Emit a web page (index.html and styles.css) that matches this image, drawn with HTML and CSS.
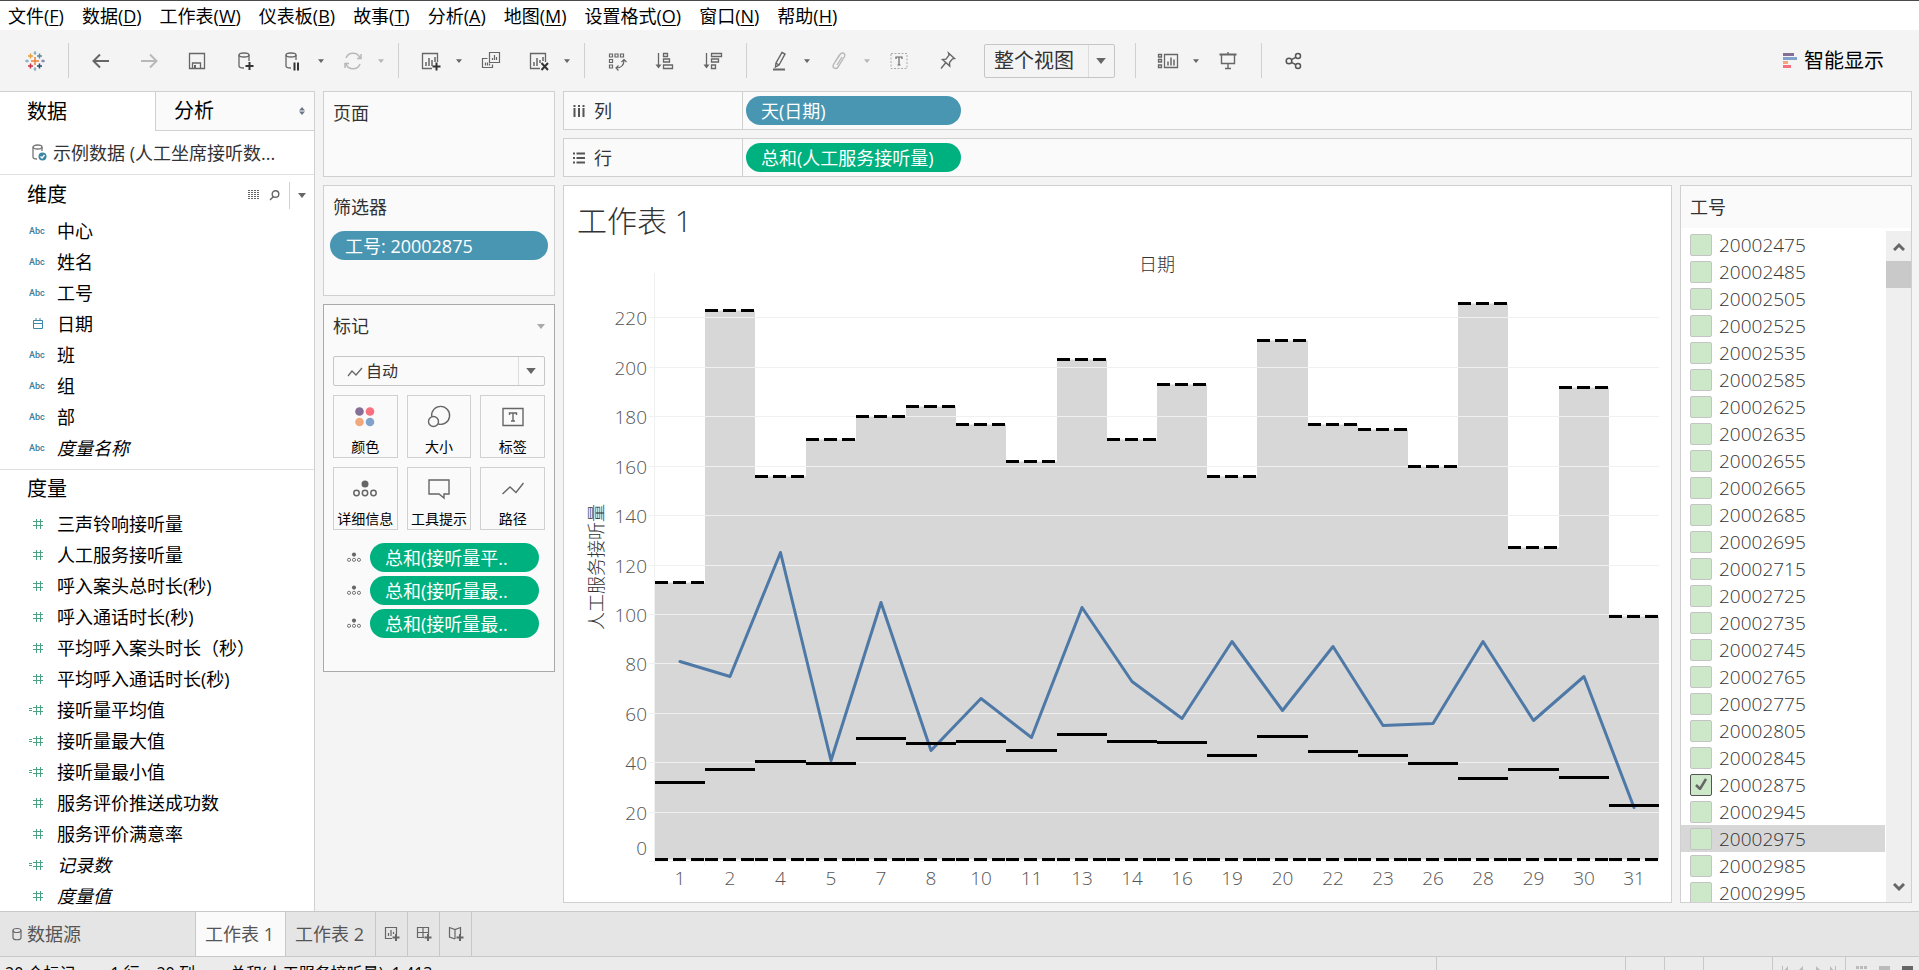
FILE: index.html
```html
<!DOCTYPE html>
<html lang="zh-CN">
<head>
<meta charset="utf-8">
<title>工作表 1</title>
<link rel="stylesheet" href="styles.css">
</head>
<body>
<svg class="sprites" aria-hidden="true">
  <symbol id="hash" viewBox="0 0 16 12"><path d="M7.500 1v10M11.500 1v10M4 3.500h10M4 7.500h10" fill="none" stroke="#4aa283"/></symbol>
  <symbol id="calc-hash" viewBox="0 0 16 12"><path d="M7.500 1v10M11.500 1v10M4 3.500h10M4 7.500h10M0 4.500h3M0 6.500h3" fill="none" stroke="#4aa283"/></symbol>
  <symbol id="detail" viewBox="0 0 24 18"><circle cx="12" cy="4" r="3.500" fill="#666"/><g fill="none" stroke="#666" stroke-width="1.500"><circle cx="3.500" cy="13" r="2.700"/><circle cx="12" cy="13" r="2.700"/><circle cx="20.500" cy="13" r="2.700"/></g></symbol>
  <symbol id="caret" viewBox="0 0 8 5"><path d="M0 0h8L4 5z" fill="currentColor"/></symbol>
</svg>

<nav class="menubar">
  <button>文件(<u>F</u>)</button><button>数据(<u>D</u>)</button><button>工作表(<u>W</u>)</button><button>仪表板(<u>B</u>)</button><button>故事(<u>T</u>)</button><button>分析(<u>A</u>)</button><button>地图(<u>M</u>)</button><button>设置格式(<u>O</u>)</button><button>窗口(<u>N</u>)</button><button>帮助(<u>H</u>)</button>
</nav>

<div class="toolbar">
  <button class="tool" aria-label="起始页"><svg viewBox="0 0 24 24" fill="none"><path d="M12 8v8M8 12h8" stroke="#eb7f3a" stroke-width="1.500"/><path d="M7.500 4.500v5M5 7h5" stroke="#e8a13a" stroke-width="1.500"/><path d="M16.500 4.500v5M14 7h5" stroke="#5a8a9c" stroke-width="1.500"/><path d="M7.500 14.500v5M5 17h5" stroke="#c8334a" stroke-width="1.500"/><path d="M16.500 14.500v5M14 17h5" stroke="#2d4d78" stroke-width="1.500"/><path d="M12 2v4M10.500 4h3M12 18v4M10.500 20h3" stroke="#6fa0b4"/><path d="M2 12h4M4 10.500v3" stroke="#6fa0b4"/><path d="M18 12h4M20 10.500v3" stroke="#6a6aa8"/></svg></button>
  <span class="sep"></span>
  <button class="tool" aria-label="撤消"><svg viewBox="0 0 24 24" fill="none" stroke="#666" stroke-width="2"><path d="M20 12H5M11 5.500L4.500 12l6.500 6.500"/></svg></button>
  <button class="tool" aria-label="重做"><svg viewBox="0 0 24 24" fill="none" stroke="#b8b8b8" stroke-width="2"><path d="M4 12h15M13 5.500l6.500 6.500-6.500 6.500"/></svg></button>
  <button class="tool" aria-label="保存"><svg viewBox="0 0 24 24" fill="none" stroke="#666" stroke-width="1.300"><path d="M4.500 4.500h15v15h-15zM7.500 19v-5h8v5"/><path d="M9 16h2v3H9z" fill="#666" stroke="none"/></svg></button>
  <button class="tool" aria-label="新建数据源"><svg viewBox="0 0 24 24" fill="none" stroke="#666" stroke-width="1.300"><ellipse cx="11" cy="6" rx="5" ry="2"/><path d="M6 6v11c0 1.500 2 2 5 2M16 6v6"/><path d="M16.500 13v8M12.500 17h8" stroke="#333" stroke-width="2"/></svg></button>
  <span class="split"><button class="tool" aria-label="暂停自动更新"><svg viewBox="0 0 24 24" fill="none" stroke="#666" stroke-width="1.300"><ellipse cx="10" cy="6" rx="5" ry="2"/><path d="M5 6v11c0 1.500 2 2 5 2M15 6v5"/><path d="M13.500 13.500v8M17 13.500v8" stroke="#333" stroke-width="2"/></svg></button><button class="more" aria-label="更多"><svg><use href="#caret"/></svg></button></span>
  <span class="split dim"><button class="tool" aria-label="运行更新"><svg viewBox="0 0 24 24" fill="none" stroke="#b8b8b8" stroke-width="1.500"><path d="M5 9a7.500 7.500 0 0 1 14 0M19 15a7.500 7.500 0 0 1-14 0M20 5v4.500h-4M4 19v-4.500h4"/></svg></button><button class="more" aria-label="更多"><svg><use href="#caret"/></svg></button></span>
  <span class="sep"></span>
  <span class="split"><button class="tool" aria-label="新建工作表"><svg viewBox="0 0 24 24" fill="none" stroke="#666" stroke-width="1.300"><path d="M13 19.500H3.500v-15h15V13"/><path d="M7 17v-4M10 17V9M13 17v-6M16 13V8" stroke-width="1.500"/><path d="M17.500 13.500v8M13.500 17.500h8" stroke="#333" stroke-width="2"/></svg></button><button class="more" aria-label="更多"><svg><use href="#caret"/></svg></button></span>
  <button class="tool" aria-label="复制"><svg viewBox="0 0 24 24" fill="none" stroke="#666" stroke-width="1.200"><path d="M10.500 3.500h10v10h-10zM8.500 9.500h-5v9h10v-3"/><path d="M13.500 11V9M15.500 11V6M17.500 11V8M6.500 16.500v-3M8.500 16.500v-3M10.500 16.500v-2"/></svg></button>
  <span class="split"><button class="tool" aria-label="清除工作表"><svg viewBox="0 0 24 24" fill="none" stroke="#666" stroke-width="1.300"><path d="M13 19.500H3.500v-15h15V13"/><path d="M7 17v-4M10 17V9M13 14v-3M16 12V8" stroke-width="1.500"/><path d="M14.500 14l6.500 7M21 14l-6.500 7" stroke="#333" stroke-width="2"/></svg></button><button class="more" aria-label="更多"><svg><use href="#caret"/></svg></button></span>
  <span class="sep"></span>
  <button class="tool" aria-label="交换行和列"><svg viewBox="0 0 24 24" fill="none" stroke="#666" stroke-width="1.200"><path d="M4.500 5h3v3h-3zM10 5h3v3h-3zM15.500 5h3v3h-3zM4.500 10.500h3v3h-3zM4.500 16h3v3h-3z"/><path d="M11 19c5 0 8-3 8-8M16.500 13l2.500-2.500 2.500 2.500M13.500 16.500L11 19l2.500 2.500"/></svg></button>
  <button class="tool" aria-label="升序排序"><svg viewBox="0 0 24 24" fill="none" stroke="#666" stroke-width="1.300"><path d="M5.500 4v14M10.500 4.500h4v3h-4zM10.500 10h6v3h-6zM10.500 16h9v3.500h-9z"/><path d="M2.500 15.500h6l-3 4z" fill="#666" stroke="none"/></svg></button>
  <button class="tool" aria-label="降序排序"><svg viewBox="0 0 24 24" fill="none" stroke="#666" stroke-width="1.300"><path d="M5.500 4v14M10.500 4.500h10v3h-10zM10.500 10h7v3h-7zM10.500 16h4v3.500h-4z"/><path d="M2.500 15.500h6l-3 4z" fill="#666" stroke="none"/></svg></button>
  <span class="sep"></span>
  <span class="split"><button class="tool" aria-label="突出显示"><svg viewBox="0 0 24 24" fill="none" stroke="#666" stroke-width="1.400"><path d="M15 3.500l3 1.500-6 11-3.500 2 .5-4zM9 14l3 2"/><path d="M6 20.500h12" stroke-width="2"/></svg></button><button class="more" aria-label="更多"><svg><use href="#caret"/></svg></button></span>
  <span class="split dim"><button class="tool" aria-label="组"><svg viewBox="0 0 24 24" fill="none" stroke="#b8b8b8" stroke-width="1.400"><path d="M8 13l5-7.500c2-3 6-1 4.500 2L11 18c-2 3-6.500 1-4.500-2.500l5.500-9M15 8l-5 8"/></svg></button><button class="more" aria-label="更多"><svg><use href="#caret"/></svg></button></span>
  <button class="tool" aria-label="显示标记标签"><svg viewBox="0 0 24 24" fill="none" stroke="#aaa"><path d="M4 4.500h16v15H4z" stroke-dasharray="2 1.500"/><path d="M9 10V8h6v2M12 8v8M10.500 16h3" stroke="#666" stroke-width="1.200"/></svg></button>
  <button class="tool" aria-label="固定轴"><svg viewBox="0 0 24 24" fill="none" stroke="#666" stroke-width="1.400"><path d="M13.500 4l6 5.500-2 .3-3 3.700.2 3.500L7.500 10.500l3.500-.3 3-4zM10.500 14L6 19.500"/></svg></button>
  <span class="dropdown fit"><select aria-label="适合"><option>整个视图</option></select><svg class="arrow"><use href="#caret"/></svg></span>
  <span class="sep"></span>
  <span class="split"><button class="tool" aria-label="显示/隐藏卡"><svg viewBox="0 0 24 24" fill="none" stroke="#666" stroke-width="1.300"><path d="M8.500 5.500h13v13h-13zM2.500 5.500h3v2.500h-3zM2.500 10.500h3v2.500h-3zM2.500 16h3v2.500h-3z"/><path d="M12 16.500v-4M15 16.500v-8M18 16.500v-6" stroke-width="1.500"/></svg></button><button class="more" aria-label="更多"><svg><use href="#caret"/></svg></button></span>
  <button class="tool" aria-label="演示模式"><svg viewBox="0 0 24 24" fill="none" stroke="#666" stroke-width="1.400"><path d="M5.500 6v8.500h13V6M12 14.500v5M9 19.500h6M12 3v2"/><path d="M3.500 5.500h17" stroke-width="2"/></svg></button>
  <span class="sep"></span>
  <button class="tool" aria-label="共享"><svg viewBox="0 0 24 24" fill="none" stroke="#555" stroke-width="1.500"><circle cx="7" cy="12" r="2.800"/><circle cx="16" cy="7" r="2.500"/><circle cx="16" cy="17" r="2.500"/><path d="M9.500 10.700l4.200-2.400M9.500 13.300l4.200 2.400"/></svg></button>
  <button class="showme"><svg viewBox="0 0 14 16"><path fill="#866f97" d="M0 0h11v3H0z"/><path fill="#81a3cb" d="M0 4h14v3H0z"/><path fill="#f1a87c" d="M0 8h5v3H0z"/><path fill="#f9707f" d="M0 12h8v3H0z"/></svg>智能显示</button>
</div>

<main class="workspace">
  <aside class="datapane">
    <div class="pane-tabs">
      <button class="active">数据</button>
      <button class="idle">分析<svg viewBox="0 0 6 8"><path d="M0 3.500h6L3 0zM0 4.500h6L3 8z" fill="#6b7688"/></svg></button>
    </div>
    <button class="source"><svg viewBox="0 0 16 18" fill="none" stroke="#777" stroke-width="1.300"><ellipse cx="6.500" cy="3" rx="4.500" ry="2"/><path d="M2 3v10c0 1.200 1.500 2 4 2M11 3v4"/><circle cx="11.500" cy="12.500" r="4" fill="#3c87a5" stroke="none"/><path d="M9.500 12.500l1.500 1.500 2.500-3" stroke="#fff"/></svg>示例数据 (人工坐席接听数...</button>
    <section class="fields dimensions">
      <header><h2>维度</h2>
        <button aria-label="查看数据"><svg class="grid-icon" viewBox="0 0 12 10"><path d="M0 .5h12M0 2.500h12M0 4.500h12M0 6.500h12M0 8.500h12" stroke="#666" stroke-dasharray="2 1"/></svg></button>
        <button aria-label="查找字段"><svg class="find-icon" viewBox="0 0 11 11" fill="none" stroke="#666" stroke-width="1.400"><circle cx="6.500" cy="4" r="3.300"/><path d="M4.500 6.500L1 10"/></svg></button>
        <button class="menu" aria-label="菜单"><svg><use href="#caret"/></svg></button>
      </header>
      <ul>
        <li><b>Abc</b>中心</li>
        <li><b>Abc</b>姓名</li>
        <li><b>Abc</b>工号</li>
        <li><svg viewBox="0 0 16 12" fill="none" stroke="#3c87a5"><path d="M4.500 2.500h9v8h-9zM4.500 5.500h9M7 0v3M11 0v3"/></svg>日期</li>
        <li><b>Abc</b>班</li>
        <li><b>Abc</b>组</li>
        <li><b>Abc</b>部</li>
        <li><b>Abc</b><i>度量名称</i></li>
      </ul>
    </section>
    <section class="fields measures">
      <header><h2>度量</h2></header>
      <ul>
        <li><svg><use href="#hash"/></svg>三声铃响接听量</li>
        <li><svg><use href="#hash"/></svg>人工服务接听量</li>
        <li><svg><use href="#hash"/></svg>呼入案头总时长(秒)</li>
        <li><svg><use href="#hash"/></svg>呼入通话时长(秒)</li>
        <li><svg><use href="#hash"/></svg>平均呼入案头时长（秒）</li>
        <li><svg><use href="#hash"/></svg>平均呼入通话时长(秒)</li>
        <li><svg><use href="#calc-hash"/></svg>接听量平均值</li>
        <li><svg><use href="#calc-hash"/></svg>接听量最大值</li>
        <li><svg><use href="#calc-hash"/></svg>接听量最小值</li>
        <li><svg><use href="#hash"/></svg>服务评价推送成功数</li>
        <li><svg><use href="#hash"/></svg>服务评价满意率</li>
        <li><svg><use href="#calc-hash"/></svg><i>记录数</i></li>
        <li><svg><use href="#hash"/></svg><i>度量值</i></li>
      </ul>
    </section>
  </aside>

  <div class="cards">
    <section class="card pages"><h3>页面</h3></section>
    <section class="card filters"><h3>筛选器</h3><button class="pill blue">工号: 20002875</button></section>
    <section class="card marks">
      <h3>标记<svg><use href="#caret"/></svg></h3>
      <span class="dropdown mark-type">
        <svg class="lead" viewBox="0 0 16 10"><path d="M1 9l4-5 4 4 6-7" fill="none" stroke="#666" stroke-width="1.300"/></svg>
        <select aria-label="标记类型"><option>自动</option></select><svg class="arrow"><use href="#caret"/></svg>
      </span>
      <div class="mark-grid">
        <button><svg viewBox="0 0 24 24"><circle cx="6.500" cy="6.500" r="4.300" fill="#866f97"/><circle cx="17" cy="6.500" r="4.300" fill="#f9707f"/><circle cx="6.500" cy="17" r="4.300" fill="#f1a87c"/><circle cx="17" cy="17" r="4.300" fill="#81a3cb"/></svg>颜色</button>
        <button><svg viewBox="0 0 24 24" fill="none" stroke="#666" stroke-width="1.400"><path d="M4.700 11.500a9 9 0 1 1 6.500 7.500"/><circle cx="6.500" cy="16.500" r="5"/></svg>大小</button>
        <button><svg viewBox="0 0 24 24" fill="none" stroke="#666" stroke-width="1.400"><path d="M2 3.500h20v17H2zM8.500 10V8h7v2M12 8v8M10 16h4"/></svg>标签</button>
        <button><svg><use href="#detail" y="3" height="18"/></svg>详细信息</button>
        <button><svg viewBox="0 0 24 24" fill="none" stroke="#666" stroke-width="1.400"><path d="M3 3h19v14h-5v4l-5-4H2V3z"/></svg>工具提示</button>
        <button><svg viewBox="0 0 24 24" fill="none" stroke="#666" stroke-width="1.400"><path d="M1.500 17L9 10l6 5.500L22.500 6"/></svg>路径</button>
      </div>
      <div class="mark-pills">
        <div><svg><use href="#detail"/></svg><button class="pill green">总和(接听量平..</button></div>
        <div><svg><use href="#detail"/></svg><button class="pill green">总和(接听量最..</button></div>
        <div><svg><use href="#detail"/></svg><button class="pill green">总和(接听量最..</button></div>
      </div>
    </section>
  </div>

  <div class="canvas">
    <section class="shelf"><h3><svg viewBox="0 0 12 12"><path d="M1.500 0v2M1.500 3v9M6 0v2M6 3v9M10.500 0v2M10.500 3v9" stroke="#555" stroke-width="2"/></svg>列</h3><button class="pill blue">天(日期)</button></section>
    <section class="shelf"><h3><svg viewBox="0 0 12 12"><path d="M0 1.500h2M3.500 1.500h9M0 6h2M3.500 6h9M0 10.500h2M3.500 10.500h9" stroke="#555" stroke-width="2"/></svg>行</h3><button class="pill green">总和(人工服务接听量)</button></section>
    <div class="viewrow">
      <section class="view">
        <h1>工作表 1</h1>
        <div class="chart"><svg id="chart" role="img" aria-label="人工服务接听量"></svg></div>
      </section>
      <section class="legend">
        <h3>工号</h3>
        <div class="legend-body">
          <div class="options">
            <label><input type="checkbox">20002475</label>
            <label><input type="checkbox">20002485</label>
            <label><input type="checkbox">20002505</label>
            <label><input type="checkbox">20002525</label>
            <label><input type="checkbox">20002535</label>
            <label><input type="checkbox">20002585</label>
            <label><input type="checkbox">20002625</label>
            <label><input type="checkbox">20002635</label>
            <label><input type="checkbox">20002655</label>
            <label><input type="checkbox">20002665</label>
            <label><input type="checkbox">20002685</label>
            <label><input type="checkbox">20002695</label>
            <label><input type="checkbox">20002715</label>
            <label><input type="checkbox">20002725</label>
            <label><input type="checkbox">20002735</label>
            <label><input type="checkbox">20002745</label>
            <label><input type="checkbox">20002765</label>
            <label><input type="checkbox">20002775</label>
            <label><input type="checkbox">20002805</label>
            <label><input type="checkbox">20002845</label>
            <label class="checked"><input type="checkbox" checked><svg viewBox="0 0 12 12"><path d="M1 7l4 4 6-10" fill="none" stroke="#666" stroke-width="2.500"/></svg>20002875</label>
            <label><input type="checkbox">20002945</label>
            <label class="hover"><input type="checkbox">20002975</label>
            <label><input type="checkbox">20002985</label>
            <label><input type="checkbox">20002995</label>
          </div>
          <div class="scrollbar">
            <button aria-label="向上"><svg viewBox="0 0 12 9"><path d="M1 8l5-5 5 5" fill="none" stroke="#666" stroke-width="3"/></svg></button>
            <span class="thumb"></span>
            <button class="down" aria-label="向下"><svg viewBox="0 0 12 9"><path d="M1 1l5 5 5-5" fill="none" stroke="#666" stroke-width="3"/></svg></button>
          </div>
        </div>
      </section>
    </div>
  </div>
</main>

<nav class="sheets">
  <button class="datasource"><svg viewBox="0 0 10 14" fill="none" stroke="#666" stroke-width="1.200"><ellipse cx="5" cy="3.500" rx="4" ry="2"/><path d="M1 3.500v7c0 3 8 3 8 0v-7"/></svg>数据源</button>
  <button class="active">工作表 1</button>
  <button>工作表 2</button>
  <button class="add" aria-label="新建工作表"><svg viewBox="0 0 18 18" fill="none" stroke="#666" stroke-width="1.200"><path d="M9 13.500H2.500v-11h11V9M5.500 11V8M8 11V5M10.500 9V7"/><path d="M13 9v7M9.500 12.500h7" stroke-width="2"/></svg></button>
  <button class="add" aria-label="新建仪表板"><svg viewBox="0 0 18 18" fill="none" stroke="#666" stroke-width="1.200"><path d="M9 12.500H2.500v-10h11V9M8 2.500v10M2.500 7.500h11"/><path d="M13 9v7M9.500 12.500h7" stroke-width="2"/></svg></button>
  <button class="add" aria-label="新建故事"><svg viewBox="0 0 18 18" fill="none" stroke="#666" stroke-width="1.200"><path d="M8 14l-5.500-2V2.500L8 4.500l5.500-2V9M8 4.500V14"/><path d="M13 9v7M9.500 12.500h7" stroke-width="2"/></svg></button>
</nav>

<footer class="status">
  <span>20 个标记</span><span>1 行 x 20 列</span><span>总和(人工服务接听量): 1,413</span>
  <div class="status-cells">
    <span class="message"></span><span class="slot"></span><span class="slot"></span><span class="user"></span>
    <span class="paging"><svg viewBox="0 0 54 12" fill="#bbb"><path d="M0 0h1v12H0zM6 0v12L1 6zM21 0v12l-6-6zM34 0v12l6-6zM48 0v12l5-6zM53 0h1v12h-1z"/></svg></span>
    <span class="modes"><svg viewBox="0 0 58 12"><path d="M0 0h3v3H0zM4 0h3v3H4zM8 0h3v3H8zM0 4h3v3H0zM4 4h3v3H4zM8 4h3v3H8zM23 0h11v12H23z" fill="#bbb"/><path d="M46 0h11v12H46z" fill="#666"/></svg></span>
  </div>
</footer>
<script src="chart.js"></script>
</body>
</html>
```

FILE: styles.css
```css
* { box-sizing: border-box; }
body {
  margin: 0;
  height: 100vh;
  display: flex;
  flex-direction: column;
  overflow: hidden;
  border-top: 1px solid #4a4a4a;
  background: #f4f4f4;
  color: #000;
  font: 18px/26px "Open Sans", "Noto Sans CJK SC", sans-serif;
}
button, select { font: inherit; color: inherit; background: none; border: 0; padding: 0; margin: 0; }
h1, h2, h3, ul { margin: 0; padding: 0; font-weight: 400; }
ul { list-style: none; }
svg { display: block; flex: none; }
.sprites { position: absolute; width: 0; height: 0; }

.menubar { flex: none; height: 29px; background: #fff; display: flex; align-items: center; gap: 18px; padding-left: 8px; white-space: nowrap; }
.menubar u { text-underline-offset: 2px; }

.toolbar { flex: none; height: 61px; display: flex; align-items: center; gap: 4px; padding: 0 35px 0 13px; }
.tool { width: 44px; height: 32px; display: grid; place-items: center; }
.tool svg { width: 24px; height: 24px; }
.split { display: flex; align-items: center; color: #666; }
.split.dim { color: #b8b8b8; }
.more { width: 12px; height: 32px; display: grid; place-items: center; }
.more svg { width: 6px; height: 4px; }
.sep { width: 1px; height: 35px; background: #d0d0d0; margin: 0 6px 0 7px; }
.dropdown { position: relative; display: flex; border: 1px solid #c6c6c6; border-radius: 2px; color: #333; }
.dropdown select { appearance: none; width: 100%; height: 100%; }
.dropdown .arrow { position: absolute; right: 8px; top: 50%; margin-top: -3px; width: 10px; height: 6px; color: #666; pointer-events: none; }
.dropdown::after { content: ""; position: absolute; right: 25px; top: 0; bottom: 0; width: 1px; background: #dcdcdc; }
.fit { width: 131px; height: 34px; margin: 0 9px 0 11px; font-size: 20px; line-height: 30px; }
.fit select { padding-left: 9px; }
.showme { margin-left: auto; display: flex; align-items: center; gap: 7px; font-size: 20px; }
.showme svg { width: 14px; height: 16px; }

.workspace { flex: 1; min-height: 0; display: flex; }
.datapane { width: 315px; flex: none; background: #fff; border: solid #d0d0d0; border-width: 1px 1px 0 0; overflow: hidden; }
.pane-tabs { display: flex; height: 39px; font-size: 20px; }
.pane-tabs button { text-align: left; padding-left: 27px; }
.pane-tabs .active { width: 155px; }
.pane-tabs .idle { flex: 1; display: flex; align-items: center; justify-content: space-between; padding: 0 9px 0 18px; background: #fafafa; border: solid #d0d0d0; border-width: 0 0 1px 1px; }
.pane-tabs svg { width: 6px; height: 8px; }
.source { width: 100%; height: 44px; display: flex; align-items: center; gap: 6px; padding-left: 31px; color: #333; border-bottom: 1px solid #e0e0e0; white-space: nowrap; }
.source svg { width: 16px; height: 18px; }
.fields header { height: 40px; display: flex; align-items: center; gap: 9px; padding-left: 27px; }
.fields h2 { font-size: 20px; flex: 1; }
.fields .menu { height: 27px; width: 25px; display: grid; place-items: center; border-left: 1px solid #d0d0d0; color: #666; }
.fields .menu svg { width: 8px; height: 5px; }
.grid-icon { width: 12px; height: 10px; }
.find-icon { width: 11px; height: 11px; }
.dimensions { padding-bottom: 6px; border-bottom: 1px solid #e0e0e0; }
.measures header { height: 38px; }
.fields li { height: 31px; display: flex; align-items: center; gap: 12px; padding-left: 29px; white-space: nowrap; }
.fields li svg { width: 16px; height: 12px; }
.fields li b { width: 16px; font: 500 9px/12px Roboto, sans-serif; color: #3c7d9a; }

.cards { width: 232px; margin-left: 8px; flex: none; display: flex; flex-direction: column; gap: 8px; }
.card { background: #fafafa; border: 1px solid #d0d0d0; color: #333; padding: 8px 9px; }
.card h3, .legend h3 { font-size: 18px; line-height: 26px; }
.pages { height: 86px; }
.filters { height: 111px; }
.pill { height: 29px; border-radius: 15px; color: #fff; text-align: left; padding-left: 15px; white-space: nowrap; }
.blue { background: #4996b2; }
.green { background: #00b180; }
.filters .pill { width: 218px; margin: 11px -3px 0; }
.marks { height: 368px; border-color: #aaa; }
.marks h3 { display: flex; align-items: center; justify-content: space-between; }
.marks h3 svg { width: 8px; height: 5px; color: #aaa; }
.mark-type { height: 30px; margin-top: 17px; font-size: 16px; line-height: 24px; }
.mark-type select { padding-left: 32px; }
.mark-type .lead { position: absolute; left: 13px; top: 10px; width: 16px; height: 10px; }
.mark-grid { display: grid; grid-template-columns: repeat(3, 1fr); gap: 9px; margin-top: 9px; }
.mark-grid button { height: 63px; border: 1px solid #d0d0d0; display: flex; flex-direction: column; align-items: center; justify-content: space-between; padding: 9px 0 0; font-size: 14px; line-height: 20px; color: #000; white-space: nowrap; }
.mark-grid svg { width: 24px; height: 24px; }
.mark-pills { margin-top: 13px; display: grid; gap: 4px; }
.mark-pills div { display: flex; align-items: center; gap: 9px; padding: 0 6px 0 14px; }
.mark-pills svg { width: 14px; height: 11px; }
.mark-pills .pill { flex: 1; }

.canvas { flex: 1; min-width: 0; margin: 0 7px 8px 8px; display: flex; flex-direction: column; gap: 8px; }
.shelf { flex: none; height: 39px; background: #fafafa; border: 1px solid #d0d0d0; display: flex; align-items: center; gap: 3px; color: #333; }
.shelf h3 { width: 179px; height: 100%; font-size: 18px; display: flex; align-items: center; gap: 9px; padding-left: 9px; border-right: 1px solid #d0d0d0; }
.shelf h3 svg { width: 12px; height: 12px; }
.shelf .pill { width: 215px; }
.viewrow { flex: 1; min-height: 0; display: flex; gap: 8px; }
.view { flex: 1; min-width: 0; background: #fff; border: 1px solid #d0d0d0; display: flex; flex-direction: column; }
.view h1 { font-size: 30px; line-height: 40px; font-weight: 300; color: #333; padding: 15px 0 0 13px; }
.chart { flex: 1; min-height: 0; }
.chart svg { width: 100%; height: 100%; }
.chart text { font-size: 19px; font-weight: 300; fill: #555; }
.chart .axis-title { font-size: 18px; fill: #333; }
.grid-line { stroke: #f0f0f0; }
.band { fill: #d7d7d7; }
.bound { stroke: #000; stroke-width: 3; stroke-dasharray: 13 5; }
.average { stroke: #000; stroke-width: 3; }
.series { fill: none; stroke: #4e79a7; stroke-width: 3; stroke-linejoin: round; stroke-linecap: round; }

.legend { width: 232px; flex: none; background: #fafafa; border: 1px solid #d0d0d0; color: #333; display: flex; flex-direction: column; }
.legend h3 { height: 42px; padding: 8px 9px; flex: none; }
.legend-body { flex: 1; min-height: 0; display: flex; background: #fff; padding-top: 3px; }
.options { flex: 1; overflow: hidden; }
.options label { position: relative; height: 27px; display: flex; align-items: center; gap: 7px; padding-left: 9px; font-size: 19px; font-weight: 300; }
.options input { appearance: none; margin: 0; width: 22px; height: 22px; background: #cde8c9; border: 1px solid #c4c4c4; border-radius: 2px; }
.options .checked input { border-color: #555; }
.options label svg { position: absolute; left: 14px; top: 7px; width: 12px; height: 12px; }
.options .hover { background: #d7d7d7; }
.scrollbar { width: 25px; margin-left: 1px; background: #efefef; display: flex; flex-direction: column; }
.scrollbar button { height: 30px; display: grid; place-items: center; }
.scrollbar svg { width: 12px; height: 9px; }
.scrollbar .thumb { height: 27px; background: #c9c9c9; }
.scrollbar .down { margin-top: auto; }

.sheets { flex: none; height: 46px; display: flex; background: #e5e5e5; border: solid #c8c8c8; border-width: 1px 0; color: #555; }
.sheets button { min-width: 90px; padding: 0 9px; text-align: left; border-right: 1px solid #c8c8c8; white-space: nowrap; }
.sheets .datasource { width: 196px; display: flex; align-items: center; gap: 5px; padding-left: 12px; }
.datasource svg { width: 10px; height: 14px; }
.sheets .active { background: #fafafa; }
.sheets .add { min-width: 32px; width: 32px; padding: 0; display: grid; place-items: center; }
.sheets .add svg { width: 18px; height: 18px; }

.status { flex: none; height: 13px; display: flex; gap: 35px; padding: 4px 0 0 5px; background: #ebebeb; overflow: hidden; font-size: 16px; line-height: 24px; }
.status > span { white-space: nowrap; }
.status-cells { margin: -4px 0 0 auto; display: flex; height: 13px; overflow: hidden; }
.status-cells span { border-left: 1px solid #c8c8c8; padding-top: 9px; }
.message { width: 189px; }
.slot { width: 39px; }
.user { width: 69px; }
.paging { width: 73px; padding-left: 9px; }
.modes { width: 74px; padding-left: 10px; }
.paging svg { width: 54px; height: 12px; }
.modes svg { width: 58px; height: 12px; }
```

FILE: chart.js
```js
const days = [1, 2, 4, 5, 7, 8, 10, 11, 13, 14, 16, 19, 20, 22, 23, 26, 28, 29, 30, 31];
const calls = [81, 75, 125, 41, 105, 45, 66, 50, 103, 73, 58, 89, 61, 87, 55, 56, 89, 57, 75, 22];
const highest = [113, 223, 156, 171, 180, 184, 177, 162, 203, 171, 193, 156, 211, 177, 175, 160, 226, 127, 192, 99];
const average = [31.8, 37.4, 40.3, 39.5, 49.6, 47.6, 48.4, 44.8, 51.6, 48.4, 48, 42.8, 50.4, 44.4, 43.1, 39.5, 33.5, 37.1, 33.9, 22.5];
const lowest = 1;
const axisMax = 238;

const chart = document.getElementById('chart');
const margin = { top: 32, right: 12, bottom: 41, left: 91 };

function draw() {
  const box = chart.parentElement.getBoundingClientRect();
  const right = box.width - margin.right;
  const bottom = box.height - margin.bottom;
  const step = (right - margin.left) / days.length;
  const x = i => Math.round(margin.left + i * step);
  const y = v => Math.round(bottom - v / axisMax * (bottom - margin.top)) + 0.5;
  const line = (cls, x1, y1, x2, y2) => `<line class="${cls}" x1="${x1}" y1="${y1}" x2="${x2}" y2="${y2}"/>`;
  const text = (anchor, tx, ty, s) => `<text text-anchor="${anchor}" x="${tx}" y="${ty}">${s}</text>`;
  let out = '';

  days.forEach((d, i) => {
    const top = y(highest[i]);
    out += `<rect class="band" x="${x(i)}" y="${top}" width="${x(i + 1) - x(i)}" height="${y(lowest) - top}"/>`;
  });
  for (let v = 0; v <= 220; v += 20) {
    out += line('grid-line', margin.left - 6, y(v), right, y(v));
    out += text('end', margin.left - 8, v ? y(v) + 7 : y(v) - 7, v);
  }
  out += line('grid-line', margin.left - 0.5, margin.top, margin.left - 0.5, bottom + 4);
  days.forEach((d, i) => {
    out += line('grid-line', x(i + 1) - 0.5, bottom, x(i + 1) - 0.5, bottom + 4);
    out += text('middle', (x(i) + x(i + 1)) / 2, bottom + 24, d);
  });
  out += `<polyline class="series" points="${calls.map((v, i) => `${(x(i) + x(i + 1)) / 2},${y(v)}`).join(' ')}"/>`;
  days.forEach((d, i) => {
    out += line('bound', x(i), y(highest[i]), x(i + 1), y(highest[i]));
    out += line('bound', x(i), y(lowest), x(i + 1), y(lowest));
    out += line('average', x(i), y(average[i]), x(i + 1), y(average[i]));
  });
  out += `<text class="axis-title" text-anchor="middle" x="${(margin.left + right) / 2}" y="30">日期</text>`;
  const middle = (margin.top + bottom) / 2;
  out += `<text class="axis-title" text-anchor="middle" transform="translate(39 ${middle}) rotate(-90)">人工服务接听量</text>`;
  chart.innerHTML = out;
}

draw();
window.addEventListener('resize', draw);
```
